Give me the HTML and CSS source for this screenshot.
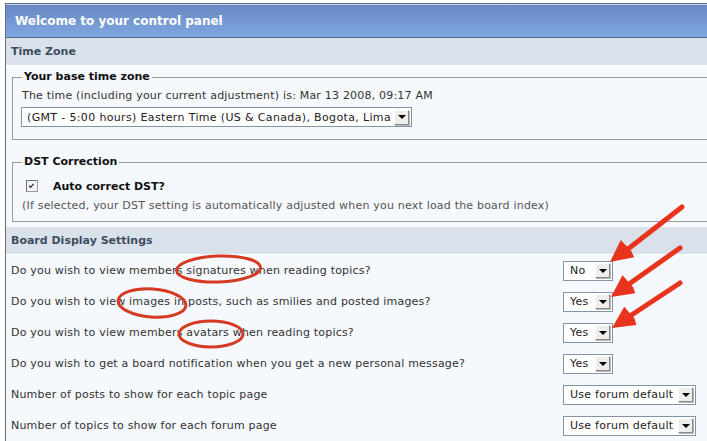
FILE: index.html
```html
<!DOCTYPE html>
<html lang="en">
<head>
<meta charset="utf-8">
<title>Control panel</title>
<link rel="stylesheet" href="styles.css">
</head>
<body>
<div class="panel">
  <div class="panel-title">Welcome to your control panel</div>
  <div class="section-head">Time Zone</div>
  <div class="section-body">
    <fieldset class="group">
      <legend>Your base time zone</legend>
      <p class="line">The time (including your current adjustment) is: Mar 13 2008, 09:17 AM</p>
      <div class="select wide"><span>(GMT - 5:00 hours) Eastern Time (US &amp; Canada), Bogota, Lima</span><span class="arrow"></span></div>
    </fieldset>
    <fieldset class="group dst">
      <legend>DST Correction</legend>
      <div class="check">
        <svg class="box" width="12" height="12" viewBox="0 0 12 12"><rect x="0.5" y="0.5" width="11" height="11" fill="#f4f4f4" stroke="#9a9a9a"/><path d="M0.5 11.5 V0.5 H11.5" fill="none" stroke="#6f6f6f"/><path d="M3 5.6 L4.6 7.4 L7.6 3.8" fill="none" stroke="#222" stroke-width="1.1"/></svg>
        <span class="check-label">Auto correct DST?</span>
      </div>
      <p class="hint">(If selected, your DST setting is automatically adjusted when you next load the board index)</p>
    </fieldset>
  </div>
  <div class="section-head">Board Display Settings</div>
  <div class="rows">
    <div class="row"><span>Do you wish to view members signatures when reading topics?</span><div class="select sm"><span>No</span><span class="arrow"></span></div></div>
    <div class="row"><span>Do you wish to view images in posts, such as smilies and posted images?</span><div class="select sm"><span>Yes</span><span class="arrow"></span></div></div>
    <div class="row"><span>Do you wish to view members avatars when reading topics?</span><div class="select sm"><span>Yes</span><span class="arrow"></span></div></div>
    <div class="row"><span>Do you wish to get a board notification when you get a new personal message?</span><div class="select sm"><span>Yes</span><span class="arrow"></span></div></div>
    <div class="row"><span>Number of posts to show for each topic page</span><div class="select md"><span>Use forum default</span><span class="arrow"></span></div></div>
    <div class="row"><span>Number of topics to show for each forum page</span><div class="select md"><span>Use forum default</span><span class="arrow"></span></div></div>
  </div>
</div>
<svg class="annotations" width="707" height="441" viewBox="0 0 707 441">
  <g fill="none" stroke="#d63a22" stroke-width="3">
    <ellipse cx="218.5" cy="269" rx="42" ry="13" transform="rotate(-2 218.5 269)"/>
    <ellipse cx="152" cy="303" rx="34" ry="14" transform="rotate(4 152 303)"/>
    <ellipse cx="211" cy="334" rx="32" ry="13"/>
  </g>
  <g stroke="#e8341c" stroke-width="5" stroke-linecap="round" fill="#e8341c">
    <line x1="682" y1="207" x2="628" y2="249"/>
    <line x1="680" y1="248" x2="629" y2="284"/>
    <line x1="680" y1="283" x2="630" y2="316"/>
  </g>
  <g fill="#e8341c" stroke="none">
    <path d="M610 262 L634.2 257.3 L631.5 251.6 L620.8 239.9 Z"/>
    <path d="M611 297 L635.3 293.3 L633 287 L622.5 275.3 Z"/>
    <path d="M612 328 L636.4 325.1 L634.5 318.5 L624.2 306.7 Z"/>
  </g>
</svg>
</body>
</html>
```
FILE: styles.css
```css
html, body {
  margin: 0;
}
body {
  padding: 3px 0 0 5px;
  background: #fff;
  overflow: hidden;
  font-family: "DejaVu Sans", Verdana, sans-serif;
  font-size: 11px;
  letter-spacing: 0.2px;
  color: #333;
}
.panel {
  width: 760px;
  border-left: 1px solid #5d6f80;
  border-top: 1px solid #5d6f80;
  background: #f5f8fc;
}
.panel-title {
  height: 32px;
  line-height: 33px;
  border-top: 1px solid #c9d9ef;
  border-bottom: 1px solid #4f6d91;
  background: linear-gradient(#6987c2, #7fa8e2);
  color: #fff;
  font-weight: bold;
  font-size: 12px;
  letter-spacing: 0;
  padding-left: 9px;
}
.section-head {
  height: 27px;
  line-height: 28px;
  background: #d9e2eb;
  color: #3e4d60;
  font-weight: bold;
  font-size: 11px;
  letter-spacing: 0;
  padding-left: 5px;
  border-bottom: 1px solid #fff;
}
.section-body {
  padding: 4px 0 5px 6px;
}
.group {
  margin: 0;
  padding: 5px 9px 12px;
  border: 1px solid #9b9b9b;
}
.group legend {
  padding: 0 2px;
  font-size: 11px;
  line-height: 14px;
  font-weight: bold;
  letter-spacing: 0;
  color: #111;
}
.group.dst {
  margin-top: 15px;
  padding-bottom: 8px;
}
.line {
  margin: 0;
  line-height: 14px;
}
.hint {
  margin: 6px 0 0;
  line-height: 14px;
  color: #555;
}
.check {
  display: flex;
  align-items: center;
  gap: 15px;
  margin: 5px 0 0 4px;
  height: 14px;
}
.check-label {
  font-weight: bold;
  font-size: 11px;
  letter-spacing: 0;
  color: #111;
}
.select {
  display: flex;
  align-items: center;
  justify-content: space-between;
  height: 20px;
  box-sizing: border-box;
  border: 1px solid #8294a6;
  background: #fff;
  padding: 0 2px 0 6px;
  color: #222;
  letter-spacing: 0.25px;
}
.select.wide {
  width: 391px;
  margin: 4px 0 0 -1px;
  padding-left: 5px;
  letter-spacing: 0.35px;
}
.select.sm { width: 50px; }
.select.md { width: 133px; }
.arrow {
  width: 15px;
  height: 15px;
  box-sizing: border-box;
  background: #efede9;
  border: 1px solid;
  border-color: #fff #8a8a8a #8a8a8a #fff;
  box-shadow: 1px 1px 0 #b8b8b8;
  display: flex;
  align-items: center;
  justify-content: center;
}
.arrow::after {
  content: "";
  border-left: 4px solid transparent;
  border-right: 4px solid transparent;
  border-top: 4px solid #000;
}
.rows {
  border-bottom: 1px solid #c6d6e8;
}
.row {
  display: grid;
  grid-template-columns: 552px max-content;
  align-items: center;
  height: 31px;
  padding-left: 5px;
}
.annotations {
  position: absolute;
  left: 0;
  top: 0;
  pointer-events: none;
}
```
